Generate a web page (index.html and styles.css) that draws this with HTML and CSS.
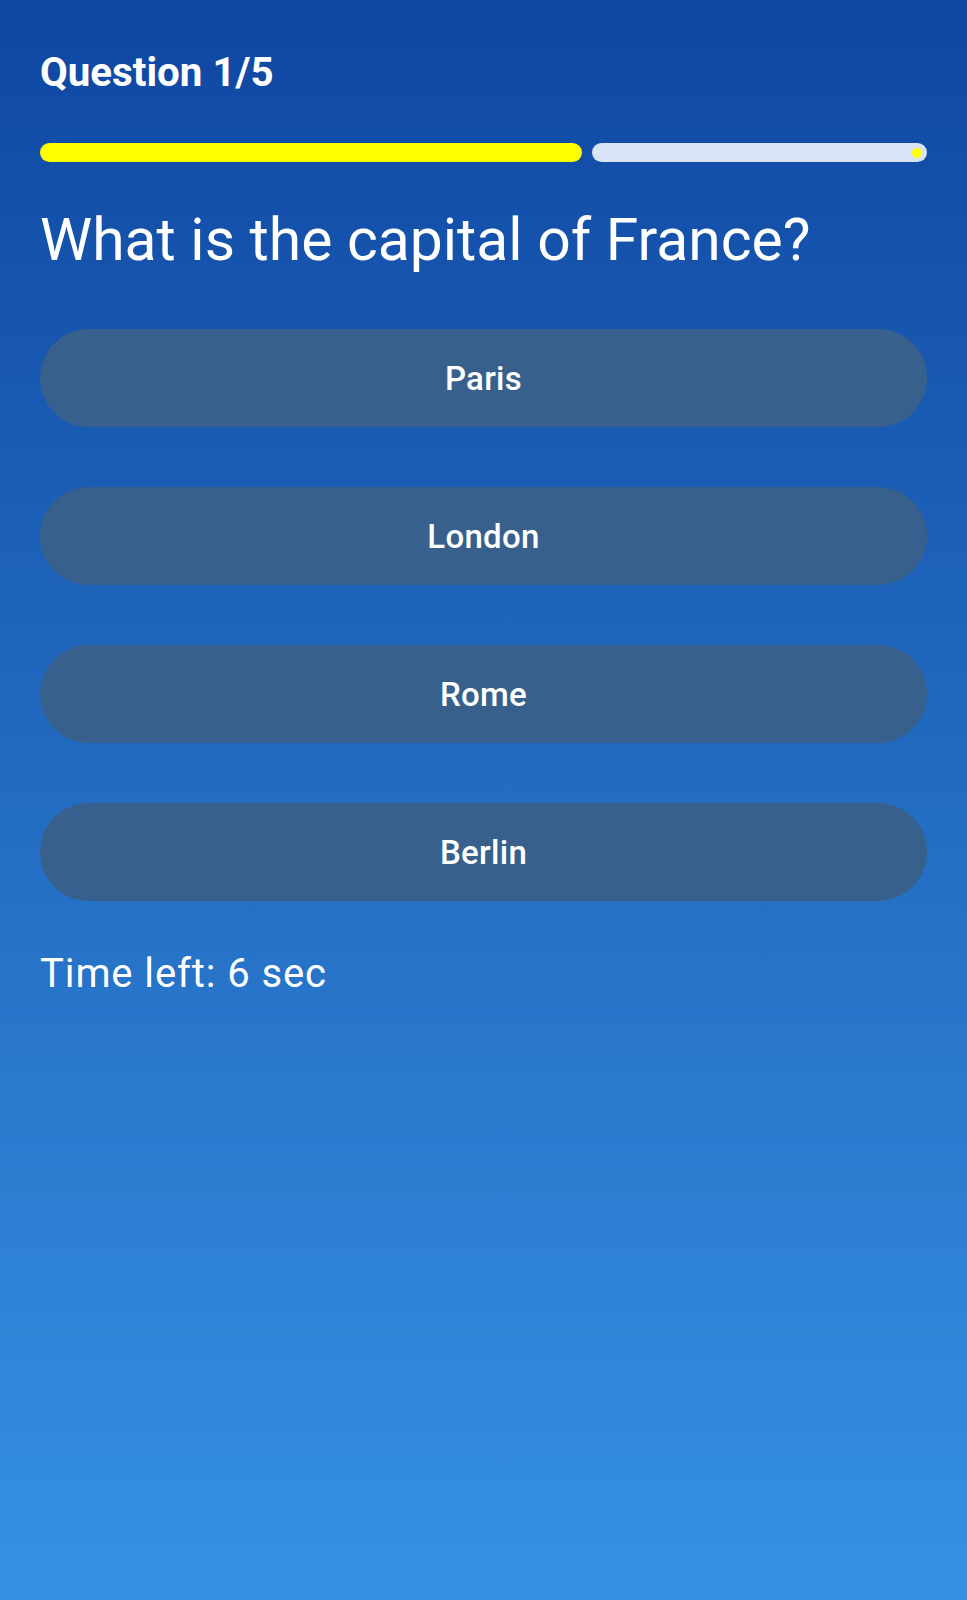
FILE: index.html
```html
<!DOCTYPE html>
<html lang="en">
<head>
<meta charset="utf-8">
<title>Quiz</title>
<link rel="stylesheet" href="styles.css">
</head>
<body>
<main class="screen">
  <div class="counter">Question 1/5</div>
  <div class="progress">
    <div class="progress-fill" style="width:61.1%"></div>
    <div class="progress-track"><span class="stop-dot"></span></div>
  </div>
  <h1 class="question">What is the capital of France?</h1>
  <div class="answers">
    <button class="answer">Paris</button>
    <button class="answer">London</button>
    <button class="answer">Rome</button>
    <button class="answer">Berlin</button>
  </div>
  <p class="timer">Time left: 6 sec</p>
</main>
</body>
</html>
```
FILE: styles.css
```css
* { box-sizing: border-box; }
html, body { margin: 0; padding: 0; }
body {
  min-height: 1600px;
  background: linear-gradient(to bottom, #0f47a2 0%, #3691e2 100%);
  font-family: Roboto, "Noto Sans", "Liberation Sans", sans-serif;
  color: #ffffff;
}
.screen {
  padding: 49px 40px 0 40px;
  display: flex;
  flex-direction: column;
}
.counter {
  font-size: 40.3px;
  line-height: 48px;
  font-weight: 700;
}
.progress {
  margin-top: 46px;
  height: 19px;
  display: flex;
  gap: 10px;
}
.progress-fill {
  height: 19px;
  background: #ffff00;
  border-radius: 10px;
  flex: none;
}
.progress-track {
  position: relative;
  flex: 1;
  height: 19px;
  background: #d8e3f6;
  border-radius: 10px;
}
.stop-dot {
  position: absolute;
  right: 5px;
  top: 4.5px;
  width: 10px;
  height: 10px;
  border-radius: 50%;
  background: #ffff00;
}
.question {
  margin: 44px 0 0 0;
  font-size: 58.8px;
  line-height: 68px;
  font-weight: 400;
}
.answers {
  margin-top: 55px;
  display: flex;
  flex-direction: column;
  gap: 60px;
}
.answer {
  height: 98px;
  border: none;
  border-radius: 49px;
  background: #37618c;
  color: #ffffff;
  font-family: inherit;
  font-size: 33px;
  font-weight: 500;
  letter-spacing: 0.3px;
  display: flex;
  align-items: center;
  justify-content: center;
  padding: 0;
}
.timer {
  margin: 49px 0 0 0;
  font-size: 40px;
  line-height: 48px;
  letter-spacing: 0.9px;
  font-weight: 400;
}
```
